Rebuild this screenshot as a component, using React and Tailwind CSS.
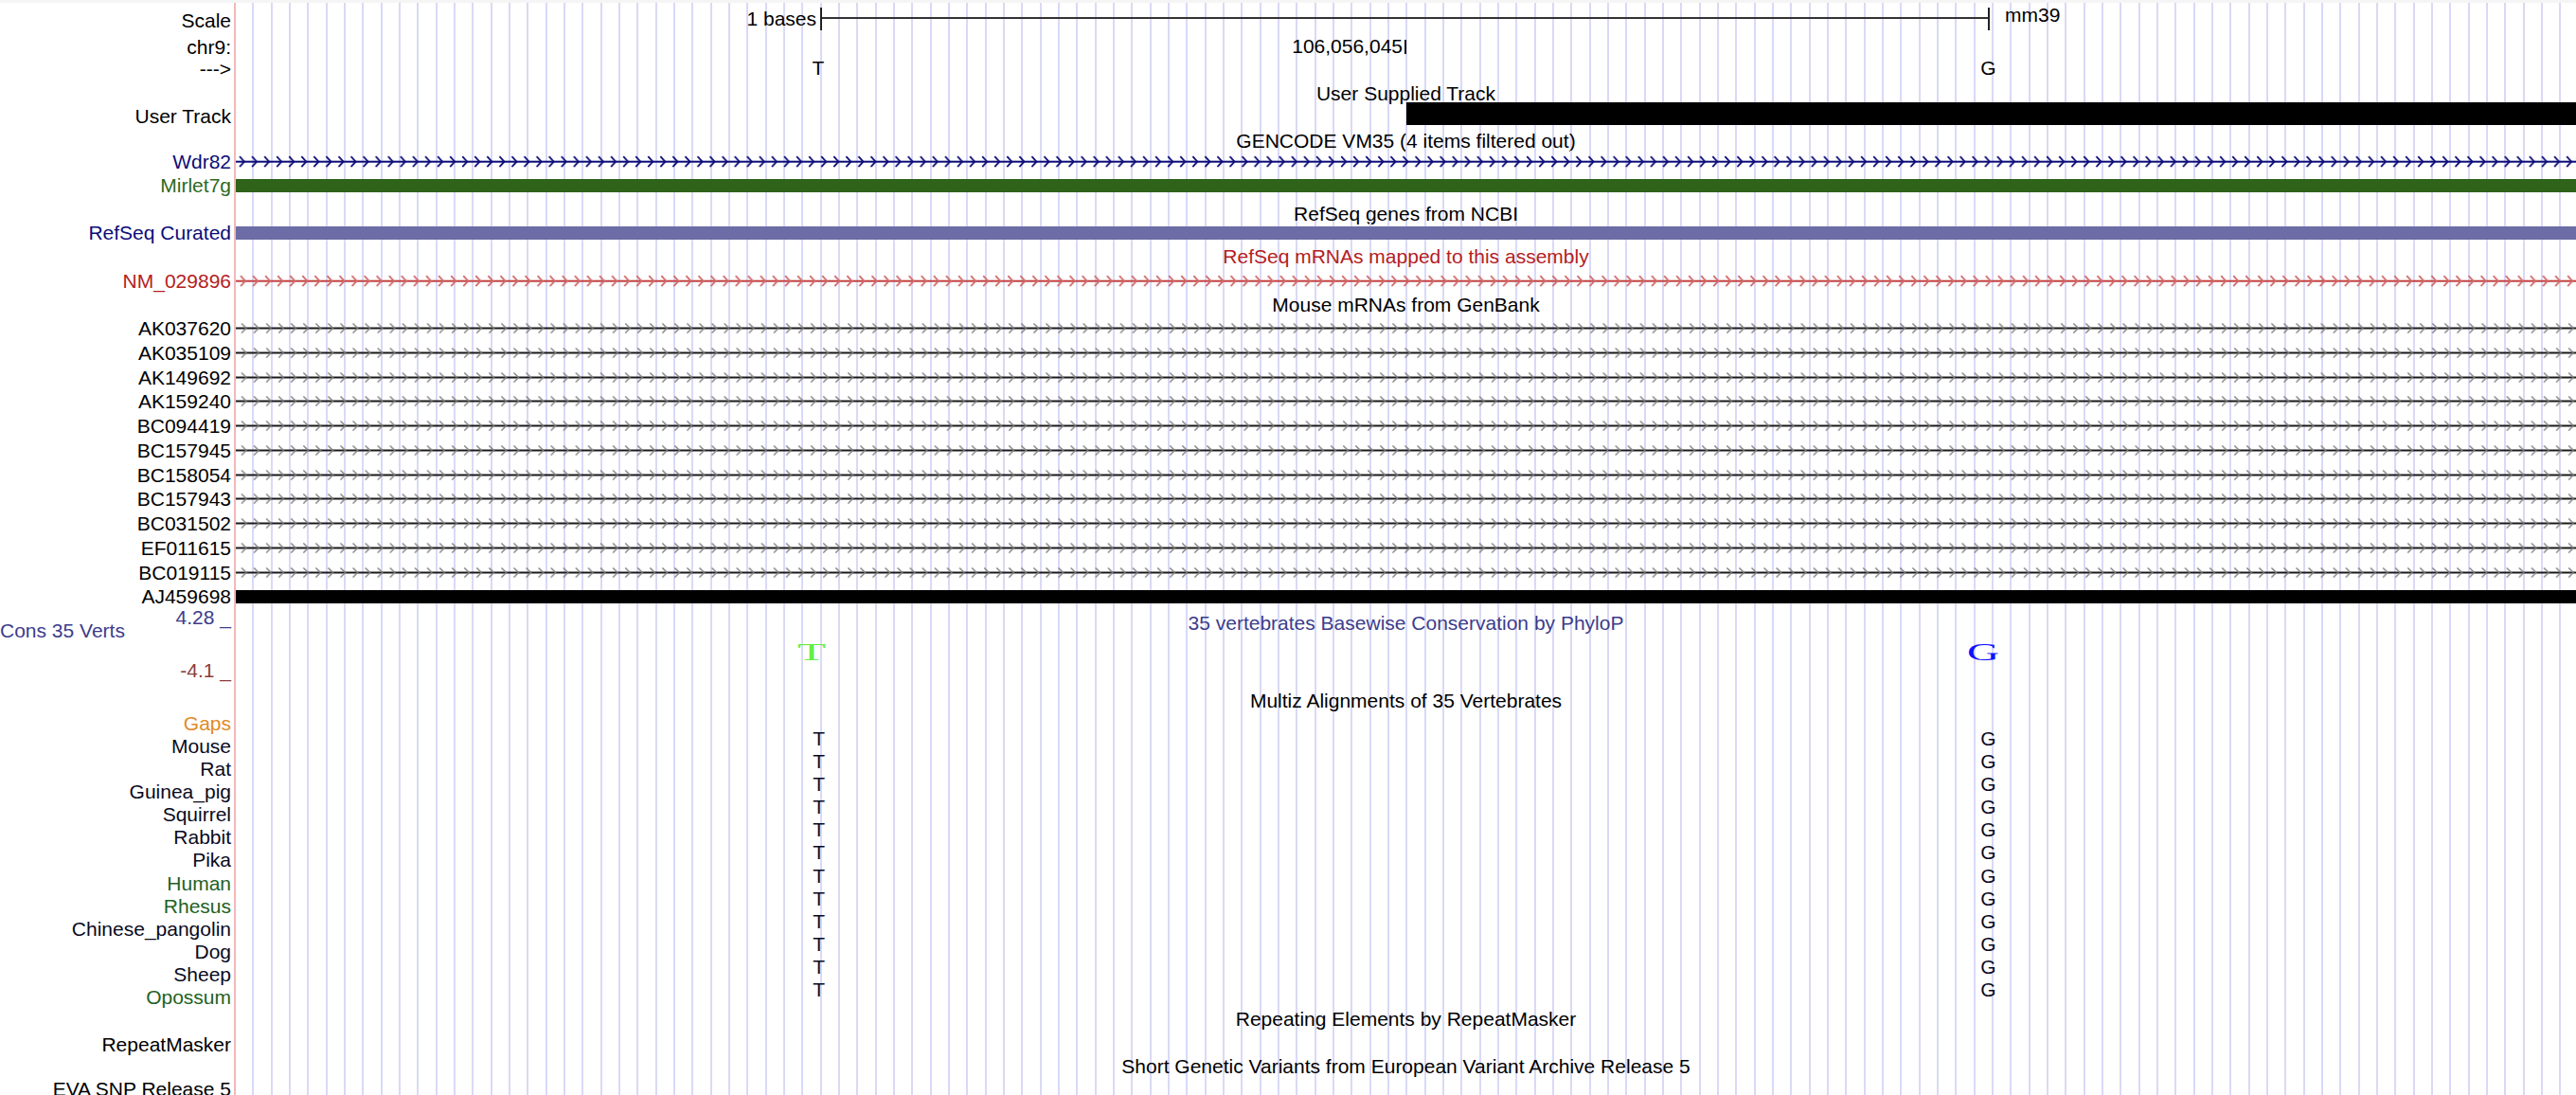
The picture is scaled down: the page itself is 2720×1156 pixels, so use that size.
import React from 'react';

const GUIDE =
  'bg-[repeating-linear-gradient(90deg,transparent_0px,transparent_17.333px,#d9d9f7_17.333px,#d9d9f7_19.333px)]';

function Row({ h, label, lc, lp, children }) {
  return (
    <div className={`flex ${h}`}>
      <div className={`w-[247px] shrink-0 pr-[3px] text-right whitespace-nowrap ${lc || ''} ${lp || ''}`}>
        {label}
      </div>
      <div className={`flex-1 min-w-0 border-l-2 border-[#f2b8b8] ${GUIDE}`}>{children}</div>
    </div>
  );
}

function Title({ h, pt, color, children }) {
  return (
    <Row h={h}>
      <div className={`text-center whitespace-nowrap ${pt} ${color || ''}`}>{children}</div>
    </Row>
  );
}

// line with strand chevrons
function Strand({ id, y, h, line, chev, x0 = 0, ax = 5, ay = 5.5, sw = 1.8 }) {
  return (
    <svg className="block" width="100%" height={h}>
      <defs>
        <pattern id={id} x={x0} y="0" width="13.07" height={h} patternUnits="userSpaceOnUse">
          <path
            d={`M${6.5 - ax / 2} ${y - ay} L${6.5 + ax / 2} ${y} L${6.5 - ax / 2} ${y + ay}`}
            fill="none"
            stroke={chev}
            strokeWidth={sw}
          />
        </pattern>
      </defs>
      <rect x="0" y={y - 1} width="100%" height="2" fill={line} />
      <rect x="0" y="0" width="100%" height={h} fill={`url(#${id})`} />
    </svg>
  );
}

const mrnas = [
  'AK037620', 'AK035109', 'AK149692', 'AK159240', 'BC094419', 'BC157945',
  'BC158054', 'BC157943', 'BC031502', 'EF011615', 'BC019115',
];

const species = [
  ['Mouse', 'text-[#0a0a1e]'],
  ['Rat', 'text-[#0a0a1e]'],
  ['Guinea_pig', 'text-[#0a0a1e]'],
  ['Squirrel', 'text-[#0a0a1e]'],
  ['Rabbit', 'text-[#0a0a1e]'],
  ['Pika', 'text-[#0a0a1e]'],
  ['Human', 'text-[#236123]'],
  ['Rhesus', 'text-[#236123]'],
  ['Chinese_pangolin', 'text-[#0a0a1e]'],
  ['Dog', 'text-[#0a0a1e]'],
  ['Sheep', 'text-[#0a0a1e]'],
  ['Opossum', 'text-[#236123]'],
];

export default function App() {
  return (
    <div className="h-[1156px] overflow-hidden bg-white text-black text-[21px] leading-6 font-['Liberation_Sans',Arial,sans-serif]">
      <div className="h-[3px] bg-[#f5f5f5]" />

      {/* ruler */}
      <Row h="h-[35px]" label="Scale" lp="pt-[7px]">
        <div className="flex items-start">
          <div className="w-[613px] shrink-0 text-right mt-[4.5px]">1 bases</div>
          <div className="ml-[3.7px] w-[2px] h-[24px] mt-[5px] bg-[#222] shrink-0" />
          <div className="w-[1231.6px] h-[2px] mt-[15px] bg-[#333] shrink-0" />
          <div className="w-[2px] h-[24px] mt-[5px] bg-[#222] shrink-0" />
          <div className="ml-[15.7px] mt-[0.5px] whitespace-nowrap">mm39</div>
        </div>
      </Row>
      <Row h="h-[23px]" label="chr9:">
        <div className="flex items-start">
          <div className="w-[1232px] shrink-0 text-right mt-[-1px]">106,056,045</div>
          <div className="ml-[2px] w-[2px] h-[15.6px] mt-[3.7px] bg-[#111] shrink-0" />
        </div>
      </Row>
      <Row h="h-[24px]" label="--->">
        <div className="flex items-start">
          <div className="ml-[605px] w-[20px] shrink-0 text-center mt-[-1px]">T</div>
          <div className="ml-[1215.5px] w-[20px] shrink-0 text-center mt-[-1px]">G</div>
        </div>
      </Row>

      <Title h="h-[23px]" pt="pt-[1.5px]">User Supplied Track</Title>
      <Row h="h-[26px]" label="User Track" lp="pt-[3px]">
        <div className="ml-[1236px] h-[24px] bg-black" />
      </Row>

      <Title h="h-[25px]" pt="pt-[3px]">GENCODE VM35 (4 items filtered out)</Title>
      <Row h="h-[24px]" label="Wdr82" lc="text-[#0c0c78]">
        <Strand id="wdr82" y={11.7} h={24} line="#0c0c78" chev="#0c0c78" />
      </Row>
      <Row h="h-[27px]" label="Mirlet7g" lc="text-[#2e6a1e]" lp="pt-[1px]">
        <div className="mt-[6px] h-[14px] bg-[#2e6319]" />
      </Row>

      <Title h="h-[24px]" pt="pt-[3.5px]">RefSeq genes from NCBI</Title>
      <Row h="h-[25px]" label="RefSeq Curated" lc="text-[#0c0c78]">
        <div className="mt-[5px] h-[14px] bg-[#6c6ca6]" />
      </Row>

      <Title h="h-[25px]" pt="pt-0" color="text-[#b4201e]">RefSeq mRNAs mapped to this assembly</Title>
      <Row h="h-[25px]" label="NM_029896" lc="text-[#b4201e]" lp="pt-[1px]">
        <Strand id="nm" y={12.7} h={25} line="#c44040" chev="#d06a6a" x0={1} />
      </Row>

      <Title h="h-[25px]" pt="pt-[1px]">Mouse mRNAs from GenBank</Title>
      {mrnas.map((m) => (
        <Row key={m} h="h-[25.75px]" label={m} lp="pt-[1px]">
          <Strand id={`m-${m}`} y={12.5} h={25.75} line="#1a1a1a" chev="#808080" x0={2} ax={5} ay={5} sw={1.4} />
        </Row>
      ))}
      <Row h="h-[25.75px]" label="AJ459698" lp="pt-[1px]">
        <div className="mt-[5.6px] h-[14px] bg-black" />
      </Row>

      {/* conservation */}
      <div className="flex h-[84px]">
        <div className="w-[247px] shrink-0 pr-[3px] flex justify-between whitespace-nowrap">
          <div className="mt-[10.7px] text-[#3c3c8c]">Cons 35 Verts</div>
          <div className="flex flex-col items-end leading-4">
            <div className="mt-[0.7px] text-[#3c3c8c]">4.28 _</div>
            <div className="mt-[40.3px] text-[#8c3c3c]">-4.1 _</div>
          </div>
        </div>
        <div className={`flex-1 min-w-0 border-l-2 border-[#f2b8b8] ${GUIDE}`}>
          <div className="mt-[6.5px] leading-4 text-center text-[#3c3c8c] whitespace-nowrap">
            35 vertebrates Basewise Conservation by PhyloP
          </div>
          <svg className="block mt-[10.5px] overflow-visible" width="100%" height="26">
            <text x="593" y="20.5" textLength="30" lengthAdjust="spacingAndGlyphs" fontFamily="Liberation Serif" fontSize="25.7" fill="#66ee44">T</text>
            <text x="1828" y="20.5" textLength="34" lengthAdjust="spacingAndGlyphs" fontFamily="Liberation Serif" fontSize="26" fill="#1010ff">G</text>
          </svg>
        </div>
      </div>

      <Title h="h-[25px]" pt="pt-[0.5px]">Multiz Alignments of 35 Vertebrates</Title>
      <Row h="h-[16px]" label="Gaps" lc="text-[#e08a2a]" />
      {species.map(([s, c]) => (
        <Row key={s} h="h-[24.1px]" label={s} lc={c} lp="pt-[8px]">
          <div className="flex items-start text-[#0a0a1e]">
            <div className="ml-[605.6px] w-[20px] shrink-0 text-center">T</div>
            <div className="ml-[1214.9px] w-[20px] shrink-0 text-center">G</div>
          </div>
        </Row>
      ))}

      <Title h="h-[32.8px]" pt="pt-[6.8px]">Repeating Elements by RepeatMasker</Title>
      <Row h="h-[24px]" label="RepeatMasker" lp="pt-[1px]" />
      <Title h="h-[24px]" pt="pt-0">Short Genetic Variants from European Variant Archive Release 5</Title>
      <Row h="h-[24px]" label="EVA SNP Release 5" />
    </div>
  );
}
